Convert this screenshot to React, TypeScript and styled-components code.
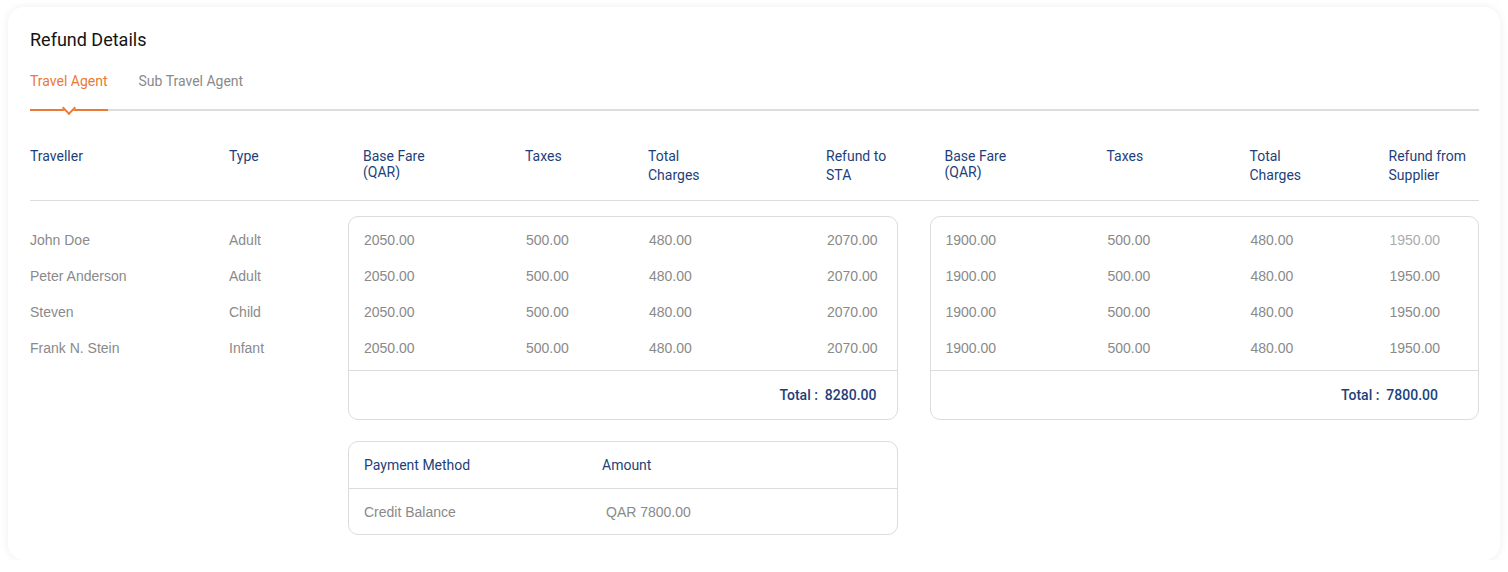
import React from "react";
import styled, { createGlobalStyle } from "styled-components";

const GlobalStyle = createGlobalStyle`
  html, body { margin: 0; padding: 0; background: #ffffff; }
  body { font-family: Roboto, "Liberation Sans", Arial, sans-serif; }
  * { box-sizing: border-box; }
`;

const BLUE = "#1e3f7a";
const GREY = "#8a8a8a";
const ORANGE = "#ea7a37";
const LINE = "#dcdcdc";

const Card = styled.div`
  margin: 7px 8px 0 8px;
  width: 1492px;
  height: 553px;
  background: #fff;
  border-radius: 16px;
  box-shadow: 0 0 10px rgba(0, 0, 0, 0.07);
  padding: 21px 21px 26px 22px;
`;

const Title = styled.h2`
  margin: 0;
  font-family: Roboto, sans-serif;
  font-weight: 400;
  font-size: 18px;
  line-height: 24px;
  color: #141414;
`;

const Tabs = styled.div`
  margin-top: 19px;
  display: flex;
  gap: 31px;
  border-bottom: 2px solid #dddddd;
`;

const Tab = styled.div<{ $active?: boolean }>`
  position: relative;
  font-family: Roboto, sans-serif;
  font-size: 14px;
  line-height: 20px;
  padding-bottom: 18px;
  color: ${(p) => (p.$active ? ORANGE : GREY)};
  ${(p) =>
    p.$active &&
    `
    &::after {
      content: "";
      position: absolute;
      left: 0;
      right: 0;
      bottom: -2px;
      height: 2px;
      background: ${ORANGE};
    }
    &::before {
      content: "";
      position: absolute;
      left: 50%;
      bottom: -4px;
      width: 8px;
      height: 8px;
      margin-left: -5px;
      background: #fff;
      border-right: 2px solid ${ORANGE};
      border-bottom: 2px solid ${ORANGE};
      transform: rotate(45deg);
      z-index: 1;
    }
  `}
`;

const MainGrid = styled.div`
  display: grid;
  grid-template-columns: 199px 119px 1fr 32px 1fr;
`;

const HeaderRow = styled(MainGrid)`
  margin-top: 37px;
  padding-bottom: 15px;
  border-bottom: 1px solid ${LINE};
  align-items: start;
`;

const HeadCell = styled.div<{ $tight?: boolean }>`
  font-family: Roboto, sans-serif;
  font-size: 14px;
  line-height: ${(p) => (p.$tight ? "16px" : "19px")};
  color: ${BLUE};
  margin-top: ${(p) => (p.$tight ? "0" : "-1px")};
`;

const ColGroup = styled.div<{ $cols: string }>`
  display: grid;
  grid-template-columns: ${(p) => p.$cols};
  padding-left: 15px;
`;

const ContentRow = styled(MainGrid)`
  padding-top: 15px;
  align-items: start;
`;

const PlainCol = styled.div`
  padding-top: 6px;
`;

const Value = styled.div<{ $muted?: boolean }>`
  height: 36px;
  display: flex;
  align-items: center;
  font-family: "Liberation Sans", Arial, sans-serif;
  font-size: 14px;
  color: ${(p) => (p.$muted ? "#acacac" : GREY)};
`;

const Stack = styled.div`
  display: flex;
  flex-direction: column;
  gap: 21px;
`;

const Box = styled.div`
  border: 1px solid ${LINE};
  border-radius: 10px;
  background: #fff;
`;

const Rows = styled.div`
  padding: 5px 0 4px;
  border-bottom: 1px solid ${LINE};
`;

const TotalRow = styled.div<{ $pad: number }>`
  height: 48px;
  display: flex;
  align-items: center;
  justify-content: flex-end;
  padding-right: ${(p) => p.$pad}px;
  font-family: Roboto, sans-serif;
  font-weight: 500;
  font-size: 14px;
  color: ${BLUE};
`;

const PayHead = styled.div`
  height: 47px;
  display: grid;
  grid-template-columns: 238px 1fr;
  align-items: center;
  padding-left: 15px;
  border-bottom: 1px solid ${LINE};
  font-family: Roboto, sans-serif;
  font-size: 14px;
  color: ${BLUE};
`;

const PayBody = styled.div`
  height: 45px;
  display: grid;
  grid-template-columns: 238px 1fr;
  align-items: center;
  padding-left: 15px;
  font-family: "Liberation Sans", Arial, sans-serif;
  font-size: 14px;
  color: ${GREY};
`;

const Indent = styled.span`
  padding-left: 4px;
`;

const LEFT_COLS = "162px 123px 178px 1fr";
const RIGHT_COLS = "162px 143px 139px 1fr";

const travellers = [
  { name: "John Doe", type: "Adult" },
  { name: "Peter Anderson", type: "Adult" },
  { name: "Steven", type: "Child" },
  { name: "Frank N. Stein", type: "Infant" },
];

type FareRow = string[];

const FareTable: React.FC<{
  cols: string;
  rows: FareRow[];
  total: string;
  pad: number;
  mutedFirst?: boolean;
}> = ({ cols, rows, total, pad, mutedFirst }) => (
  <Box>
    <Rows>
      {rows.map((r, i) => (
        <ColGroup key={i} $cols={cols}>
          {r.map((v, j) => (
            <Value key={j} $muted={mutedFirst && i === 0 && j === 3}>
              {v}
            </Value>
          ))}
        </ColGroup>
      ))}
    </Rows>
    <TotalRow $pad={pad}>Total :&nbsp; {total}</TotalRow>
  </Box>
);

export default function App() {
  const leftRows = travellers.map(() => ["2050.00", "500.00", "480.00", "2070.00"]);
  const rightRows = travellers.map(() => ["1900.00", "500.00", "480.00", "1950.00"]);
  return (
    <>
      <GlobalStyle />
      <Card>
        <Title>Refund Details</Title>
        <Tabs>
          <Tab $active>Travel Agent</Tab>
          <Tab>Sub Travel Agent</Tab>
        </Tabs>
        <HeaderRow>
          <HeadCell $tight>Traveller</HeadCell>
          <HeadCell $tight>Type</HeadCell>
          <ColGroup $cols={LEFT_COLS}>
            <HeadCell $tight>
              Base Fare
              <br />
              (QAR)
            </HeadCell>
            <HeadCell $tight>Taxes</HeadCell>
            <HeadCell>
              Total
              <br />
              Charges
            </HeadCell>
            <HeadCell>
              Refund to
              <br />
              STA
            </HeadCell>
          </ColGroup>
          <div />
          <ColGroup $cols={RIGHT_COLS}>
            <HeadCell $tight>
              Base Fare
              <br />
              (QAR)
            </HeadCell>
            <HeadCell $tight>Taxes</HeadCell>
            <HeadCell>
              Total
              <br />
              Charges
            </HeadCell>
            <HeadCell>
              Refund from
              <br />
              Supplier
            </HeadCell>
          </ColGroup>
        </HeaderRow>
        <ContentRow>
          <PlainCol>
            {travellers.map((t) => (
              <Value key={t.name}>{t.name}</Value>
            ))}
          </PlainCol>
          <PlainCol>
            {travellers.map((t) => (
              <Value key={t.name}>{t.type}</Value>
            ))}
          </PlainCol>
          <Stack>
            <FareTable cols={LEFT_COLS} rows={leftRows} total="8280.00" pad={20} />
            <Box>
              <PayHead>
                <span>Payment Method</span>
                <span>Amount</span>
              </PayHead>
              <PayBody>
                <span>Credit Balance</span>
                <Indent>QAR 7800.00</Indent>
              </PayBody>
            </Box>
          </Stack>
          <div />
          <FareTable cols={RIGHT_COLS} rows={rightRows} total="7800.00" pad={40} mutedFirst />
        </ContentRow>
      </Card>
    </>
  );
}
